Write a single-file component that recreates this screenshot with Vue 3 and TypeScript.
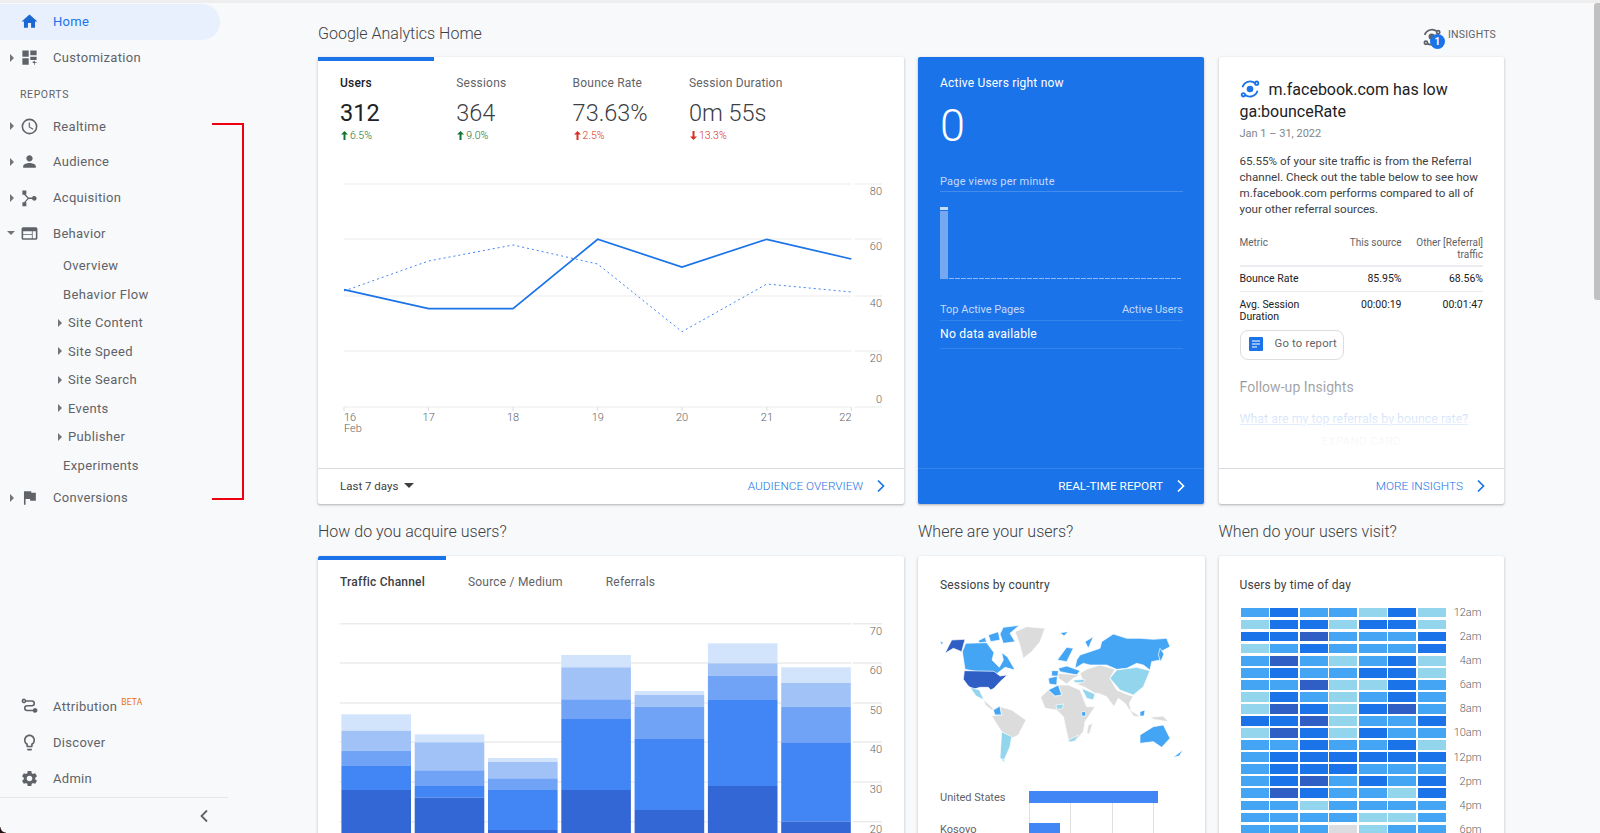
<script setup lang="ts">
interface NavItem { label: string; icon?: string; caret?: boolean; open?: boolean; active?: boolean; sub?: boolean; beta?: boolean }

const icons: Record<string, string> = {
  home: 'M10 20v-6h4v6h5v-8h3L12 3 2 12h3v8z',
  custom: 'M3 3h8v8H3zM13 3h8v6h-8zM3 13h8v8H3zM13 11h8v4h-8zM16 17h2v-1h1v2h2v1h-2v2h-1v-2h-2z',
  clock: 'M12 2a10 10 0 1 0 0 20 10 10 0 0 0 0-20zm0 18a8 8 0 1 1 0-16 8 8 0 0 1 0 16zm.5-13H11v6l5.2 3.2.8-1.3-4.5-2.7z',
  person: 'M12 12c2.21 0 4-1.79 4-4s-1.79-4-4-4-4 1.79-4 4 1.79 4 4 4zm0 2c-2.67 0-8 1.34-8 4v2h16v-2c0-2.66-5.33-4-8-4z',
  acq: 'M3 3h5v5H6.9l4 4h4.3a3 3 0 1 1 0 2h-4.3l-4 4H8v5H3v-5h2.1L9.6 13 5.1 8.5H3z',
  web: 'M20 4H4c-1.1 0-2 .9-2 2v12c0 1.1.9 2 2 2h16c1.1 0 2-.9 2-2V6c0-1.1-.9-2-2-2zm-5 14H4v-4h11v4zm0-5H4V9h11v4zm5 5h-4V9h4v9z',
  flag: 'M14.4 6L14 4H5v17h2v-7h5.6l.4 2h7V6z',
  attr: 'M5 2a3 3 0 0 1 2.8 2H15a4 4 0 0 1 0 8H9a2 2 0 0 0 0 4h7.2a3 3 0 1 1 0 2H9a4 4 0 0 1 0-8h6a2 2 0 0 0 0-4H7.8A3 3 0 1 1 5 2zm0 2a1 1 0 1 0 0 2 1 1 0 0 0 0-2z',
  bulb: 'M9 21c0 .55.45 1 1 1h4c.55 0 1-.45 1-1v-1H9v1zm3-19C8.14 2 5 5.14 5 9c0 2.38 1.19 4.47 3 5.74V17c0 .55.45 1 1 1h6c.55 0 1-.45 1-1v-2.26c1.81-1.27 3-3.36 3-5.74 0-3.86-3.14-7-7-7zm2.85 11.1l-.85.6V16h-4v-2.3l-.85-.6C7.8 12.16 7 10.63 7 9c0-2.76 2.24-5 5-5s5 2.24 5 5c0 1.63-.8 3.16-2.15 4.1z',
  gear: 'M19.14 12.94c.04-.3.06-.61.06-.94 0-.32-.02-.64-.07-.94l2.03-1.58c.18-.14.23-.41.12-.61l-1.92-3.32c-.12-.22-.37-.29-.59-.22l-2.39.96c-.5-.38-1.03-.7-1.62-.94l-.36-2.54c-.04-.24-.24-.41-.48-.41h-3.84c-.24 0-.43.17-.47.41l-.36 2.54c-.59.24-1.13.57-1.62.94l-2.39-.96c-.22-.08-.47 0-.59.22L2.74 8.87c-.12.21-.08.47.12.61l2.03 1.58c-.05.3-.09.63-.09.94s.02.64.07.94l-2.03 1.58c-.18.14-.23.41-.12.61l1.92 3.32c.12.22.37.29.59.22l2.39-.96c.5.38 1.03.7 1.62.94l.36 2.54c.05.24.24.41.48.41h3.84c.24 0 .44-.17.47-.41l.36-2.54c.59-.24 1.13-.56 1.62-.94l2.39.96c.22.08.47 0 .59-.22l1.92-3.32c.12-.22.07-.47-.12-.61l-2.01-1.58zM12 15.6c-1.98 0-3.6-1.62-3.6-3.6s1.62-3.6 3.6-3.6 3.6 1.62 3.6 3.6-1.62 3.6-3.6 3.6z'
}

const topNav: NavItem[] = [
  { label: 'Home', icon: 'home', active: true },
  { label: 'Customization', icon: 'custom', caret: true }
]
const reports: NavItem[] = [
  { label: 'Realtime', icon: 'clock', caret: true },
  { label: 'Audience', icon: 'person', caret: true },
  { label: 'Acquisition', icon: 'acq', caret: true },
  { label: 'Behavior', icon: 'web', caret: true, open: true }
]
const behavior: NavItem[] = [
  { label: 'Overview', sub: true },
  { label: 'Behavior Flow', sub: true },
  { label: 'Site Content', sub: true, caret: true },
  { label: 'Site Speed', sub: true, caret: true },
  { label: 'Site Search', sub: true, caret: true },
  { label: 'Events', sub: true, caret: true },
  { label: 'Publisher', sub: true, caret: true },
  { label: 'Experiments', sub: true }
]
const bottomNav: NavItem[] = [
  { label: 'Attribution', icon: 'attr', beta: true },
  { label: 'Discover', icon: 'bulb' },
  { label: 'Admin', icon: 'gear' }
]

const metrics = [
  { label: 'Users', value: '312', delta: '6.5%', up: true, good: true, on: true },
  { label: 'Sessions', value: '364', delta: '9.0%', up: true, good: true, on: false },
  { label: 'Bounce Rate', value: '73.63%', delta: '2.5%', up: true, good: false, on: false },
  { label: 'Session Duration', value: '0m 55s', delta: '13.3%', up: false, good: false, on: false }
]

/* line chart */
const lx = [26, 110.6, 195, 279.7, 364, 448.8, 533.3]
const lineGrid = [{ y: 5, t: '80' }, { y: 60, t: '60' }, { y: 117, t: '40' }, { y: 172, t: '20' }, { y: 228, t: '0' }]
const solid = [110.7, 129.7, 129.7, 60.3, 88, 60.3, 80]
const dotted = [112, 82, 66, 85, 152.7, 105, 113]
const pts = (ys: number[]) => ys.map((y, i) => `${lx[i]},${y}`).join(' ')
const days = ['16', '17', '18', '19', '20', '21', '22']
const dayX = (i: number) => (i === 0 ? lx[0] : i === 6 ? lx[6] - 12 : lx[i] - 6)

/* stacked bars */
const stackColors = ['#d2e3fc', '#a1c2f7', '#70a3f6', '#4285f4', '#3367d6']
const stacks = [
  [313, 362, 422, 468, 540],
  [373, 397, 481, 528, 563],
  [444, 456, 505, 540, 660],
  [135, 172, 268, 327, 540],
  [243, 255, 290, 385, 600],
  [100, 160, 197, 268, 528],
  [172, 219, 290, 397, 635]
]
const stackRects = stacks.flatMap((edges, b) =>
  edges.map((e, i) => {
    const next = i < 4 ? edges[i + 1] : 669
    return { key: `${b}-${i}`, x: 23.4 + b * 73.3, y: e / 3, h: (next - e) / 3, fill: stackColors[i] }
  })
)
const stackGrid = [
  { y: 13.7, t: '70' }, { y: 53, t: '60' }, { y: 93, t: '50' },
  { y: 132, t: '40' }, { y: 172, t: '30' }, { y: 211.7, t: '20' }
]

/* heat map */
const heatColors = ['#dadce0', '#93d5ed', '#45a5f5', '#1a73e8', '#2f5ec4']
const heat = [
  '2322131', '1331331', '3342223', '1232223', '2421231', '2322331', '2241132',
  '1321232', '1431342', '3341223', '1431322', '2232231', '2333333', '2333222',
  '2342323', '2432213', '2212222', '2222112', '2220122'
]
const hours = ['12am', '2am', '4am', '6am', '8am', '10am', '12pm', '2pm', '4pm', '6pm']
const cellColor = (code: string) => heatColors[Number(code)]

const G = '#dcdcdc'
const L = '#93d5ed'
const M = '#45a5f5'
const D = '#2f5ec4'
const mapShapes: { fill: string; d: string }[] = [
  { fill: G, d: 'M285 65 320 50 375 55 360 95 335 125 310 145 298 100Z' },
  { fill: D, d: 'M75 130 95 90 135 88 125 125 100 115Z' },
  { fill: M, d: 'M127 125 137 100 200 98 222 128 216 150 238 172 250 150 245 128 262 140 285 180 255 172 225 195 135 178Z' },
  { fill: M, d: 'M250 52 298 46 270 70 285 95 250 100 240 72Z' },
  { fill: M, d: 'M205 75 235 65 240 90 212 95Z' },
  { fill: M, d: 'M175 92 195 82 200 96 178 98Z' },
  { fill: D, d: 'M133 182 222 184 240 198 262 195 240 215 222 235 212 240 205 232 180 232 160 238 145 228 130 208Z' },
  { fill: L, d: 'M150 232 178 240 192 270 168 258Z' },
  { fill: G, d: 'M190 268 222 298 215 300 196 285Z' },
  { fill: M, d: 'M220 300 240 288 245 315 225 315Z' },
  { fill: G, d: 'M240 290 275 300 318 330 295 375 275 385 245 365 215 318 228 316 245 315Z' },
  { fill: L, d: 'M245 365 275 380 270 410 250 455 240 445Z' },
  { fill: G, d: 'M362 262 385 240 405 258 425 255 415 225 445 225 480 240 500 290 525 290 495 335 490 365 465 395 445 390 430 320 410 300 375 295Z' },
  { fill: G, d: 'M505 345 518 340 508 372 500 370Z' },
  { fill: M, d: 'M385 240 415 225 425 255 405 258Z' },
  { fill: L, d: 'M408 285 432 282 425 297 410 297Z' },
  { fill: M, d: 'M485 305 497 305 497 318 485 318Z' },
  { fill: L, d: 'M443 392 475 375 465 392 450 396Z' },
  { fill: G, d: 'M480 190 500 178 540 165 585 178 570 205 590 240 625 255 640 258 628 280 635 310 615 280 595 265 582 290 560 260 535 250 525 250 495 232 470 222 490 215Z' },
  { fill: M, d: 'M465 175 470 150 480 135 510 125 540 115 545 95 580 72 620 85 660 85 700 88 740 85 750 110 722 125 720 150 695 155 690 180 670 165 650 160 620 175 590 178 560 165 510 165 490 160Z' },
  { fill: L, d: 'M570 205 590 180 650 172 690 182 670 230 640 255 600 240Z' },
  { fill: L, d: 'M485 235 525 252 520 270 500 265Z' },
  { fill: L, d: 'M460 210 495 208 490 218 465 218Z' },
  { fill: M, d: 'M415 175 440 168 480 182 470 195 420 185Z' },
  { fill: M, d: 'M385 205 412 198 410 225 388 222Z' },
  { fill: M, d: 'M395 182 415 182 414 198 395 198Z' },
  { fill: M, d: 'M412 150 440 112 460 115 440 155Z' },
  { fill: G, d: 'M415 190 480 195 460 205 440 222 415 205Z' },
  { fill: M, d: 'M660 375 700 350 730 345 750 385 725 412 700 395 660 400Z' },
  { fill: G, d: 'M630 300 665 322 640 318Z' },
  { fill: M, d: 'M660 305 675 300 672 318 660 318Z' },
  { fill: G, d: 'M690 322 730 318 745 335 700 328Z' },
  { fill: M, d: 'M420 68 445 65 432 78Z' },
  { fill: M, d: 'M720 115 732 132 722 155 715 135Z' },
  { fill: M, d: 'M760 442 788 420 778 438Z' },
  { fill: M, d: 'M60 92 70 98 65 105Z' },
  { fill: M, d: 'M495 95 520 80 505 115Z' },
  { fill: L, d: 'M240 445 252 448 256 458Z' }
]

const tickLines = [0, 40, 80, 120]
</script>

<template>
  <div class="page">
    <aside class="side">
      <nav class="nav-top">
        <a v-for="n in topNav" :key="n.label" class="nav" :class="{ active: n.active }">
          <i class="caret" :class="{ hidden: !n.caret }"></i>
          <svg class="ico" viewBox="0 0 24 24"><path :d="icons[n.icon!]" /></svg>
          <span>{{ n.label }}</span>
        </a>
        <div class="section">REPORTS</div>
        <a v-for="n in reports" :key="n.label" class="nav">
          <i class="caret" :class="{ open: n.open }"></i>
          <svg class="ico" viewBox="0 0 24 24"><path :d="icons[n.icon!]" /></svg>
          <span>{{ n.label }}</span>
        </a>
        <div class="subs">
          <a v-for="n in behavior" :key="n.label" class="subnav">
            <i class="caret small" :class="{ hidden: !n.caret }"></i>
            <span :class="{ plain: !n.caret }">{{ n.label }}</span>
          </a>
        </div>
        <a class="nav conv">
          <i class="caret"></i>
          <svg class="ico" viewBox="0 0 24 24"><path :d="icons.flag" /></svg>
          <span>Conversions</span>
        </a>
      </nav>
      <nav class="nav-bottom">
        <a v-for="n in bottomNav" :key="n.label" class="nav">
          <i class="caret hidden"></i>
          <svg class="ico" viewBox="0 0 24 24"><path :d="icons[n.icon!]" /></svg>
          <span>{{ n.label }}</span>
          <sup v-if="n.beta" class="beta">BETA</sup>
        </a>
      </nav>
      <div class="collapse">
        <svg width="12" height="14" viewBox="0 0 12 14"><path d="M9 1.5 3.5 7 9 12.5" fill="none" stroke="#5f6368" stroke-width="1.8" /></svg>
      </div>
      <div class="bracket"></div>
    </aside>

    <main class="main">
      <div class="grid">
        <h2 class="heading wide">Google Analytics Home</h2>
        <div class="insights-btn">
          <span class="ib-icon">
            <svg width="21" height="21" viewBox="0 0 24 24" fill="none" stroke="#5f6368" stroke-width="2"><circle cx="11" cy="11" r="3.5" fill="#5f6368" stroke="none" /><path d="M3 9a9 9 0 0 1 14-4M19 13a9 9 0 0 1-13 6" /><circle cx="18.5" cy="6" r="1.8" /><circle cx="4.5" cy="18" r="1.8" /></svg>
            <b class="badge">1</b>
          </span>
          <span>INSIGHTS</span>
        </div>

        <section class="card overview">
          <div class="tabbar t1"></div>
          <div class="metrics">
            <div v-for="m in metrics" :key="m.label" class="metric">
              <div class="m-label" :class="{ on: m.on }">{{ m.label }}</div>
              <div class="m-value" :class="{ on: m.on }">{{ m.value }}</div>
              <div class="m-delta" :class="m.good ? 'good' : 'bad'">
                <svg width="7" height="9" viewBox="0 0 7 9"><path :d="m.up ? 'M3.5 0 7 3.5H4.5V9h-2V3.5H0Z' : 'M3.5 9 7 5.5H4.5V0h-2v5.5H0Z'" fill="currentColor" /></svg>
                {{ m.delta }}
              </div>
            </div>
          </div>
          <svg class="line-chart" width="586" height="260" viewBox="0 0 586 260">
            <g v-for="g in lineGrid" :key="g.t">
              <line x1="26" x2="533.5" :y1="g.y" :y2="g.y" stroke="#ebebeb" />
              <line x1="536.5" x2="564" :y1="g.y" :y2="g.y" stroke="#ebebeb" />
              <text x="564" :y="g.t === '0' ? g.y - 4.5 : g.y + 11" text-anchor="end" class="axis">{{ g.t }}</text>
            </g>
            <line v-for="x in lx" :key="x" :x1="x" :x2="x" y1="228" y2="232" stroke="#ddd" />
            <polyline :points="pts(dotted)" fill="none" stroke="#4285f4" stroke-width="1" stroke-dasharray="2 3" />
            <polyline :points="pts(solid)" fill="none" stroke="#1a73e8" stroke-width="1.7" />
            <text v-for="(d, i) in days" :key="d" :x="dayX(i)" y="241.5" class="axis">{{ d }}</text>
            <text :x="lx[0]" y="252.5" class="axis">Feb</text>
          </svg>
          <footer class="foot">
            <span class="range">Last 7 days<i class="tri"></i></span>
            <a class="link">AUDIENCE OVERVIEW
              <svg width="10" height="14" viewBox="0 0 10 14"><path d="M2 1.5 7.5 7 2 12.5" fill="none" stroke="currentColor" stroke-width="1.7" /></svg>
            </a>
          </footer>
        </section>

        <section class="card realtime">
          <div class="rt-body">
            <div class="rt-title">Active Users right now</div>
            <div class="rt-value">0</div>
            <div class="rt-sub">Page views per minute</div>
            <div class="rt-bars">
              <div class="rt-first"><i></i><b></b></div>
              <div class="rt-dash"></div>
            </div>
            <div class="rt-head"><span>Top Active Pages</span><span>Active Users</span></div>
            <div class="rt-none">No data available</div>
          </div>
          <footer class="foot rt-foot">
            <a class="link white">REAL-TIME REPORT
              <svg width="10" height="14" viewBox="0 0 10 14"><path d="M2 1.5 7.5 7 2 12.5" fill="none" stroke="currentColor" stroke-width="1.7" /></svg>
            </a>
          </footer>
        </section>

        <section class="card insight">
          <div class="in-body">
            <h3 class="in-title">
              <svg class="in-ico" width="20" height="20" viewBox="0 0 24 24" fill="none" stroke="#1a73e8" stroke-width="2.2"><circle cx="12" cy="12" r="4" fill="#1a73e8" stroke="none" /><path d="M3 10a9.5 9.5 0 0 1 15-5M21 14a9.5 9.5 0 0 1-15 5" /><circle cx="20" cy="5" r="2" /><circle cx="4" cy="19" r="2" /></svg>m.facebook.com has low ga:bounceRate
            </h3>
            <div class="in-date">Jan 1 – 31, 2022</div>
            <p class="in-text">65.55% of your site traffic is from the Referral channel. Check out the table below to see how m.facebook.com performs compared to all of your other referral sources.</p>
            <table class="in-table">
              <thead>
                <tr><th class="c1">Metric</th><th class="c2">This source</th><th class="c3">Other [Referral] traffic</th></tr>
              </thead>
              <tbody>
                <tr><td>Bounce Rate</td><td>85.95%</td><td>68.56%</td></tr>
                <tr><td>Avg. Session Duration</td><td>00:00:19</td><td>00:01:47</td></tr>
              </tbody>
            </table>
            <button class="report-btn">
              <svg width="14" height="14" viewBox="0 0 14 14"><rect width="14" height="14" rx="1" fill="#1a73e8" /><path d="M3 4h8M3 7h8M3 10h5" stroke="#fff" stroke-width="1.2" /></svg>
              Go to report
            </button>
            <div class="follow">Follow-up Insights</div>
            <a class="follow-link">What are my top referrals by bounce rate?</a>
            <div class="expand">EXPAND CARD</div>
            <div class="fade"></div>
          </div>
          <footer class="foot end">
            <a class="link">MORE INSIGHTS
              <svg width="10" height="14" viewBox="0 0 10 14"><path d="M2 1.5 7.5 7 2 12.5" fill="none" stroke="currentColor" stroke-width="1.7" /></svg>
            </a>
          </footer>
        </section>

        <h2 class="heading">How do you acquire users?</h2>
        <h2 class="heading">Where are your users?</h2>
        <h2 class="heading">When do your users visit?</h2>

        <section class="card lower">
          <div class="tabbar t2"></div>
          <div class="tabs">
            <span class="on">Traffic Channel</span>
            <span>Source / Medium</span>
            <span>Referrals</span>
          </div>
          <svg class="stack" width="586" height="223" viewBox="0 0 586 223">
            <g v-for="g in stackGrid" :key="g.t">
              <line x1="21.6" x2="533" :y1="g.y" :y2="g.y" stroke="#ebebeb" stroke-width="1.4" />
              <line x1="534.5" x2="564" :y1="g.y" :y2="g.y" stroke="#ebebeb" stroke-width="1.4" />
              <text x="564" :y="g.y + 11" text-anchor="end" class="axis">{{ g.t }}</text>
            </g>
            <rect v-for="r in stackRects" :key="r.key" :x="r.x" :y="r.y" width="69.6" :height="r.h" :fill="r.fill" />
          </svg>
        </section>

        <section class="card lower pad">
          <div class="card-title">Sessions by country</div>
          <svg class="map" width="286" height="223" viewBox="0 0 858 669">
            <path v-for="(s, i) in mapShapes" :key="i" :d="s.d" :fill="s.fill" stroke="#fff" stroke-width="2" />
          </svg>
          <div class="country us"><span>United States</span><i class="cbar b1"></i></div>
          <div class="country"><span>Kosovo</span><i class="cbar b2"></i></div>
          <div class="vlines"><i v-for="t in tickLines" :key="t"></i></div>
        </section>

        <section class="card lower pad">
          <div class="card-title hm-title">Users by time of day</div>
          <div class="heat">
            <div class="cells">
              <template v-for="(row, r) in heat" :key="r">
                <i v-for="(c, k) in row.split('')" :key="k" :style="{ background: cellColor(c) }"></i>
              </template>
            </div>
            <div class="hours"><span v-for="h in hours" :key="h">{{ h }}</span></div>
          </div>
        </section>
      </div>
    </main>
    <div class="scroll"></div>
    <div class="corner"></div>
  </div>
</template>

<style>
html, body { margin: 0; padding: 0; overflow: hidden; }
</style>

<style scoped>
.page {
  position: relative;
  display: flex;
  height: 833px;
  width: 1600px;
  overflow: hidden;
  background: #f8f9fb;
  border-top: 3px solid #eeeeee;
  box-sizing: border-box;
  font-family: Roboto, "Noto Sans", sans-serif;
  color: #212121;
}

/* sidebar */
.side { position: relative; width: 228px; flex: none; display: flex; flex-direction: column; }
.nav-top { padding-top: 1px; flex: 1; }
.nav {
  display: flex; align-items: center; height: 35.7px; color: #5f6368;
  font-size: 13px; letter-spacing: 0.3px; width: 220px; box-sizing: border-box;
  border-radius: 0 18px 18px 0;
}
.nav.active { background: #e8f0fe; color: #1a73e8; }
.nav .caret { margin-left: 10px; flex: none; }
.ico { width: 19px; height: 19px; fill: #5f6368; flex: none; margin-right: 14px; }
.active .ico { fill: #1967d2; }
.caret {
  display: block; width: 0; height: 0;
  border-left: 4px solid #70757a; border-top: 4px solid transparent; border-bottom: 4px solid transparent;
  box-sizing: content-box;
}
.caret.hidden { visibility: hidden; }
.nav .caret:not(.open) { margin-right: 6px; }
.nav .caret.open {
  border-left: 4px solid transparent; border-right: 4px solid transparent; border-top: 4px solid #70757a; border-bottom: 0;
  margin-left: 7px; margin-right: 5px;
}
.section { font-size: 10.5px; letter-spacing: 0.6px; color: #5f6368; height: 33px; line-height: 40px; padding-left: 20px; }
.subnav {
  display: flex; align-items: center; height: 28.6px; font-size: 13px; letter-spacing: 0.35px; color: #5f6368;
  padding-left: 58px;
}
.subnav .caret { margin-right: 6px; }
.subnav .caret.hidden { display: none; }
.subnav .plain { margin-left: 5px; }
.conv { margin-top: 0; }
.nav-bottom { padding-bottom: 1px; }
.beta { font-size: 8.5px; color: #e8710a; align-self: flex-start; margin: 9px 0 0 4px; line-height: 1; letter-spacing: 0.2px; }
.collapse { height: 35px; border-top: 1px solid #e4e6e8; display: flex; justify-content: flex-end; align-items: center; padding-right: 18px; }
.bracket {
  position: absolute; left: 212px; top: 120px; width: 30px; height: 372.5px;
  border: 2px solid #ee0010; border-left: 0;
}

/* main */
.main { flex: 1; min-width: 0; padding-left: 90px; }
.grid {
  display: grid;
  grid-template-columns: 586px 286.5px 285.5px;
  column-gap: 14px;
  align-items: start;
}
.heading { margin: 0; font-weight: 300; font-size: 16px; color: #3c4043; height: 52px; line-height: 56px; }
.wide { grid-column: 1 / 3; height: 54px; line-height: 62px; }
.insights-btn {
  display: flex; justify-content: flex-end; padding: 23px 8px 0 0; gap: 4px;
  font-size: 10.5px; color: #5f6368; height: 31px; box-sizing: content-box;
  letter-spacing: 0.2px; line-height: 18px;
}
.ib-icon { position: relative; width: 22px; height: 22px; margin-top: 1px; }
.badge {
  position: absolute; left: 8px; top: 7px; width: 15px; height: 15px; border-radius: 50%;
  background: #1a73e8; color: #fff; font-size: 10px; font-weight: 700; text-align: center; line-height: 15px;
}
.card {
  position: relative; background: #fff; box-shadow: 0 1px 2px rgba(60, 64, 67, .3), 0 1px 3px 1px rgba(60, 64, 67, .08);
  border-radius: 2px; display: flex; flex-direction: column;
}
.overview, .realtime, .insight { height: 447px; }
.realtime { width: 286px; }
.tabbar { position: absolute; top: 0; left: 0; height: 4px; background: #1a73e8; }
.t1 { width: 116px; }
.t2 { width: 128px; }
.metrics { display: flex; padding: 19px 0 0 22px; height: 100px; box-sizing: border-box; flex: none; }
.metric { width: 116.3px; }
.m-label { font-size: 12px; line-height: 14px; color: #5f6368; font-weight: 400; letter-spacing: 0.2px; }
.m-label.on { color: #202124; font-weight: 500; }
.m-value { font-size: 23.5px; font-weight: 300; line-height: 28px; margin-top: 9px; color: #3c4043; }
.m-value.on { color: #202124; font-weight: 400; }
.m-delta { font-size: 10.5px; font-weight: 300; line-height: 12px; margin-top: 2.5px; display: flex; align-items: center; gap: 1px; }
.m-delta svg { margin: 0 1px; }
.good { color: #137333; }
.bad { color: #d93025; }
.line-chart { display: block; margin-top: 21.5px; flex: none; }
.axis { font-size: 11px; font-weight: 300; fill: #5f6368; font-family: Roboto, sans-serif; }
.foot {
  margin-top: auto; height: 36px; border-top: 1px solid #dadce0; display: flex; align-items: center; justify-content: space-between;
  padding: 0 18px 2px 22px; flex: none; box-sizing: border-box;
}
.end { justify-content: flex-end; }
.range { font-size: 11.5px; color: #3c4043; display: flex; align-items: center; }
.tri { display: block; margin-left: 6px; border-left: 5px solid transparent; border-right: 5px solid transparent; border-top: 5px solid #3c4043; }
.link { font-size: 11.8px; font-weight: 300; color: #1a73e8; display: flex; align-items: center; gap: 13px; }
.white { color: #fff; font-weight: 400; }
.realtime { background: #1a73e8; color: #fff; }
.rt-body { padding: 19px 21px 0 22px; }
.rt-title { font-size: 12px; line-height: 14px; letter-spacing: 0.2px; }
.rt-value { font-size: 45px; font-weight: 300; line-height: 52px; margin-top: 10px; }
.rt-sub { font-size: 11px; color: #c6dafc; margin-top: 23px; line-height: 14px; padding-bottom: 2px; border-bottom: 1px solid rgba(255, 255, 255, .18); letter-spacing: 0.2px; }
.rt-bars { display: flex; align-items: flex-end; height: 87px; box-sizing: border-box; }
.rt-first { width: 8px; display: flex; flex-direction: column; }
.rt-first i { display: block; height: 3px; background: #c6dafc; margin-bottom: 1px; }
.rt-first b { display: block; height: 68px; background: #76a7f1; }
.rt-dash { flex: 1; height: 1px; margin: 0 2px 0 1px; background: repeating-linear-gradient(90deg, #8fb8f4 0 5px, transparent 5px 6px); }
.rt-head { display: flex; justify-content: space-between; font-size: 11px; color: #c6dafc; margin-top: 24px; line-height: 14px; padding-bottom: 3px; border-bottom: 1px solid rgba(255, 255, 255, .12); }
.rt-none { font-size: 12.2px; line-height: 27px; border-bottom: 1px solid rgba(255, 255, 255, .12); letter-spacing: 0.2px; }
.rt-foot { justify-content: flex-end; border-top: 1px solid rgba(255, 255, 255, .12); }
.insight { overflow: hidden; }
.in-body { position: relative; flex: 1; padding: 22px 21px 0 21px; overflow: hidden; }
.in-title { margin: 0; font-size: 16px; font-weight: 400; line-height: 22px; color: #202124; }
.in-ico { vertical-align: -4px; margin-right: 9px; }
.in-date { font-size: 11px; color: #80868b; margin-top: 3px; line-height: 16px; }
.in-text { margin: 11px 0 0; font-size: 11.6px; line-height: 16px; color: #3c4043; }
.in-table { width: 100%; border-collapse: collapse; margin-top: 19.5px; font-size: 10.5px; table-layout: fixed; }
.in-table th { font-size: 10px; font-weight: 400; color: #5f6368; text-align: right; vertical-align: top; line-height: 12.5px; padding: 0 0 3.5px; border-bottom: 2px solid #ececf0; }
.in-table th.c1, .in-table td:first-child { text-align: left; }
.c1 { width: 95px; }
.c2 { width: 67px; }
.in-table td { text-align: right; vertical-align: top; line-height: 12.5px; padding: 7px 0 5px; color: #202124; }
.in-table tbody tr:first-child td { border-bottom: 1px solid #ececf0; padding-top: 6px; }
.in-table tbody tr:last-child td { padding-bottom: 0; }
.report-btn {
  display: flex; align-items: center; gap: 12px; margin-top: 6px; width: 104px; height: 30px; padding: 0 0 2px 8px;
  border: 1px solid #dadce0; border-radius: 8px; background: #fff; font: 400 11.3px Roboto, sans-serif; color: #5f6368; letter-spacing: 0.2px;
}
.follow { font-size: 14px; color: #5f6368; margin-top: 18px; line-height: 18px; letter-spacing: 0.05px; }
.follow-link { display: block; font-size: 12.4px; color: #1a73e8; text-decoration: underline; margin-top: 15px; line-height: 16px; }
.expand { text-align: center; font-size: 11.5px; color: #5f6368; margin-top: 7px; letter-spacing: 0.3px; }
.fade { position: absolute; left: 0; right: 0; bottom: 0; height: 112px; background: linear-gradient(rgba(255,255,255,0), rgba(255,255,255,.4) 27%, rgba(255,255,255,.85) 57%, rgba(255,255,255,.96) 76%, #fff); }

.lower { height: 300px; overflow: hidden; }
.tabs { display: flex; gap: 43px; padding: 19px 0 0 22px; font-size: 12px; line-height: 14px; color: #5f6368; letter-spacing: 0.2px; }
.tabs .on { color: #3c4043; font-weight: 500; }
.stack { display: block; margin-top: 21px; flex: none; }
.card-title { font-size: 12px; line-height: 14px; padding: 22px 0 0 22px; color: #3c4043; letter-spacing: 0.15px; }
.hm-title { padding-left: 21px; }
.map { display: block; position: absolute; left: 2px; top: 54px; }
.country { position: absolute; left: 22px; display: flex; align-items: center; height: 12px; font-size: 11px; color: #5f6368; }
.country.us { top: 235px; }
.country:not(.us) { top: 267px; }
.country span { width: 89px; flex: none; }
.cbar { display: block; height: 12px; background: #4285f4; position: relative; z-index: 1; }
.b1 { width: 129px; }
.b2 { width: 31px; }
.vlines { position: absolute; left: 111px; top: 247px; width: 125px; height: 60px; display: flex; justify-content: space-between; }
.vlines i { display: block; width: 1px; background: #e0e0e0; }
.heat { display: flex; padding: 16px 0 0 22px; }
.cells { display: grid; grid-template-columns: repeat(7, 28px); grid-auto-rows: 9.4px; column-gap: 1.5px; row-gap: 2.65px; width: 205px; flex: none; }
.cells i { display: block; }
.hours { display: flex; flex-direction: column; align-items: flex-end; width: 36px; font-size: 11px; font-weight: 300; color: #5f6368; }
.hours span { height: 24.1px; line-height: 10px; }

.scroll { position: absolute; right: 0; top: 0; width: 6px; height: 297px; background: #c1c1c1; border-radius: 3px 0 0 3px; }
.corner { position: absolute; left: 0; bottom: 0; width: 6px; height: 6px; background: radial-gradient(circle at 100% 0, transparent 5px, #20120f 6px); }
</style>
